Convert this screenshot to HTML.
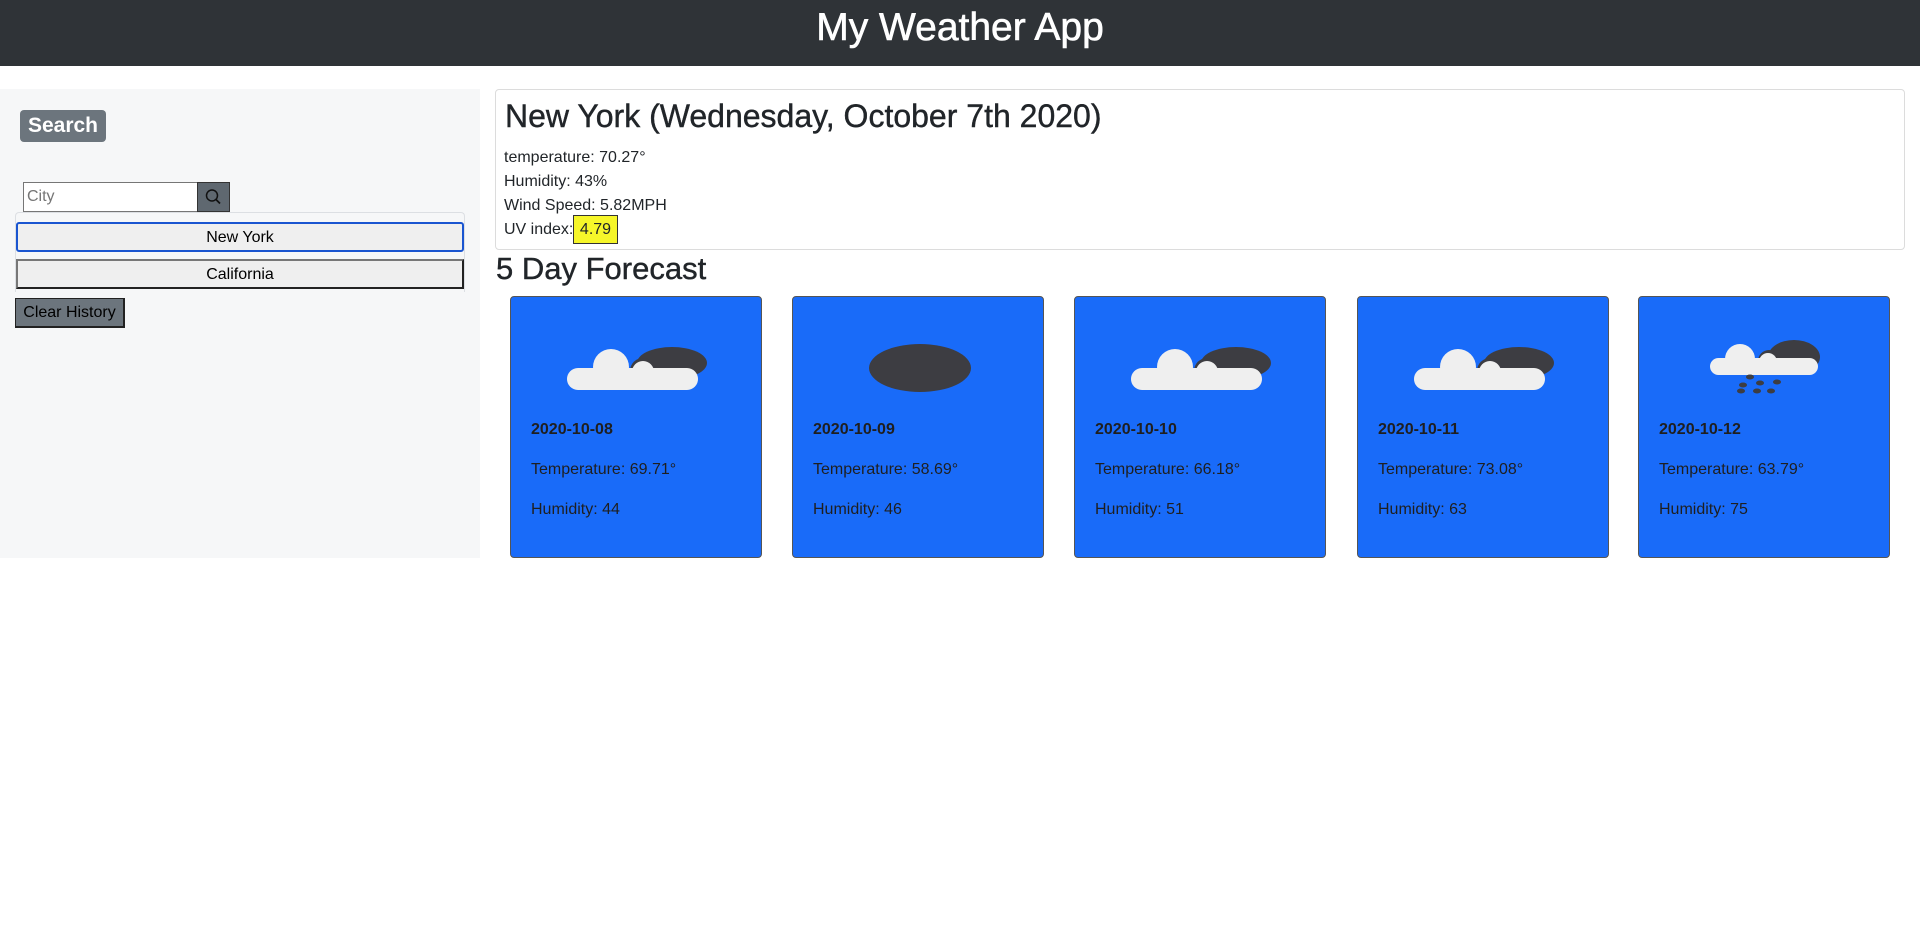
<!DOCTYPE html>
<html><head><meta charset="utf-8"><style>
*{box-sizing:border-box;margin:0;padding:0}
body{width:1920px;height:943px;background:#fff;font-family:"Liberation Sans",Helvetica,Arial,sans-serif;color:#212529;position:relative;overflow:hidden}
.hdr{position:absolute;left:0;top:0;width:1920px;height:66px;background:#2f3337;color:#fff;text-align:center;font-size:39px;line-height:56px;-webkit-text-stroke:0.6px #fff}
.side{position:absolute;left:0;top:89px;width:480px;height:469px;background:#f6f7f8}
.badge{position:absolute;left:20px;top:110px;width:86px;height:32px;background:#6c757d;color:#fff;font-weight:bold;font-size:21px;line-height:32px;text-align:center;border-radius:4px}
.inp{position:absolute;left:23px;top:182px;width:175px;height:30px;border:1px solid #767676;background:#fff;font-size:16px;color:#757575;padding:4px 3px;line-height:20px}
.sbtn{position:absolute;left:197px;top:182px;width:33px;height:30px;background:#5f6870;border:1px solid #333}
.list{position:absolute;left:15px;top:212px;width:450px;height:80px;border:1px solid #dcdfe3;border-bottom:none;border-radius:4px 4px 0 0}
.hb{position:absolute;left:16px;width:448px;height:30px;background:#efefef;font-size:16px;text-align:center;line-height:28px;color:#000}
.clr{position:absolute;left:15px;top:298px;width:110px;height:30px;background:#6c757d;border:1px solid #222;border-width:1px 2px 2px 1px;font-size:16px;line-height:28px;text-align:center;color:#000}
.main{position:absolute;left:495px;top:89px;width:1410px;height:161px;border:1px solid #dcdcdc;border-radius:4px}
.main h1{position:absolute;left:9px;top:8px;font-size:32px;font-weight:normal;white-space:nowrap;-webkit-text-stroke:0.4px #212529}
.ln{position:absolute;left:9px;font-size:16px}
.uv{position:absolute;left:573px;top:215px;width:45px;height:29px;background:#f6f62a;border:1px solid #333;font-size:16px;line-height:27px;text-align:center}
.fc{position:absolute;left:496px;top:251px;font-size:31px;-webkit-text-stroke:0.4px #212529}
.card{position:absolute;top:296px;width:252px;height:262px;background:#196bf9;border:1px solid #555;border-radius:4px}
.card svg{position:absolute;left:0;top:0}
.d{position:absolute;left:20px;top:124px;font-weight:bold;font-size:16px;color:#1f1f1f}
.t{position:absolute;left:20px;top:164px;font-size:16px;color:#1f1f1f}
.h{position:absolute;left:20px;top:204px;font-size:16px;color:#1f1f1f}
</style></head><body>
<div class="hdr">My Weather App</div>
<div class="side"></div>
<div class="badge">Search</div>
<div class="inp">City</div>
<div class="sbtn"><svg width="31" height="28" viewBox="0 0 31 28"><circle cx="14" cy="12.5" r="5.5" fill="none" stroke="#111" stroke-width="1.5"/><line x1="18" y1="16.5" x2="22" y2="20.5" stroke="#111" stroke-width="1.8"/></svg></div>
<div class="list"></div>
<div class="hb" style="top:222px;border:2px solid #1a55d0;border-radius:3px">New York</div>
<div class="hb" style="top:259px;border:2px solid #222;border-top-color:#777;border-left-color:#777">California</div>
<div class="clr">Clear History</div>
<div class="main"><h1>New York (Wednesday, October 7th 2020)</h1></div>
<div class="ln" style="top:149px;left:504px">temperature: 70.27°</div>
<div class="ln" style="top:173px;left:504px">Humidity: 43%</div>
<div class="ln" style="top:197px;left:504px">Wind Speed: 5.82MPH</div>
<div class="ln" style="top:221px;left:504px">UV index:</div>
<div class="uv">4.79</div>
<div class="fc">5 Day Forecast</div>

<div class="card" style="left:510px"><svg width="252" height="130"><ellipse cx="161" cy="66" rx="35" ry="16" fill="#3d3d42"/><g fill="#3d3d42"><circle cx="132" cy="74" r="13"/></g><g fill="#efefef"><circle cx="100" cy="70" r="18"/><circle cx="132" cy="75" r="11"/><rect x="56" y="71" width="131" height="22" rx="11"/></g></svg><div class="d">2020-10-08</div><div class="t">Temperature: 69.71°</div><div class="h">Humidity: 44</div></div>
<div class="card" style="left:792px"><svg width="252" height="130"><ellipse cx="127" cy="71" rx="51" ry="24" fill="#3d3d42"/></svg><div class="d">2020-10-09</div><div class="t">Temperature: 58.69°</div><div class="h">Humidity: 46</div></div>
<div class="card" style="left:1074px"><svg width="252" height="130"><ellipse cx="161" cy="66" rx="35" ry="16" fill="#3d3d42"/><g fill="#3d3d42"><circle cx="132" cy="74" r="13"/></g><g fill="#efefef"><circle cx="100" cy="70" r="18"/><circle cx="132" cy="75" r="11"/><rect x="56" y="71" width="131" height="22" rx="11"/></g></svg><div class="d">2020-10-10</div><div class="t">Temperature: 66.18°</div><div class="h">Humidity: 51</div></div>
<div class="card" style="left:1357px"><svg width="252" height="130"><ellipse cx="161" cy="66" rx="35" ry="16" fill="#3d3d42"/><g fill="#3d3d42"><circle cx="132" cy="74" r="13"/></g><g fill="#efefef"><circle cx="100" cy="70" r="18"/><circle cx="132" cy="75" r="11"/><rect x="56" y="71" width="131" height="22" rx="11"/></g></svg><div class="d">2020-10-11</div><div class="t">Temperature: 73.08°</div><div class="h">Humidity: 63</div></div>
<div class="card" style="left:1638px"><svg width="252" height="130"><ellipse cx="155" cy="60" rx="26" ry="17" fill="#3d3d42"/><circle cx="130" cy="64" r="11" fill="#3d3d42"/><g fill="#efefef"><circle cx="101" cy="62" r="15"/><circle cx="129" cy="65" r="9"/><rect x="71" y="61" width="108" height="17" rx="8.5"/></g><g fill="#3d3d42"><ellipse cx="111" cy="80" rx="4" ry="2.5"/><ellipse cx="104" cy="88" rx="4" ry="2.5"/><ellipse cx="121" cy="86" rx="4" ry="2.5"/><ellipse cx="138" cy="85" rx="4" ry="2.5"/><ellipse cx="102" cy="94" rx="4" ry="2.5"/><ellipse cx="118" cy="94" rx="4" ry="2.5"/><ellipse cx="132" cy="94" rx="4" ry="2.5"/></g></svg><div class="d">2020-10-12</div><div class="t">Temperature: 63.79°</div><div class="h">Humidity: 75</div></div>
</body></html>
